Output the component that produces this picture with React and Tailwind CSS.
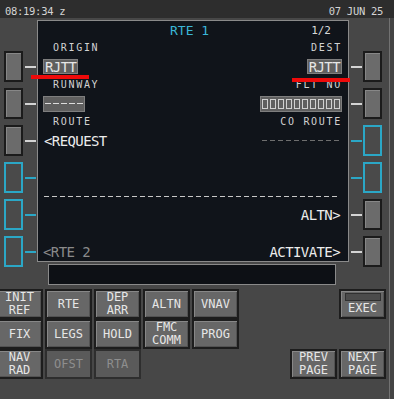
import React from "react"

const LEFT = [false, false, false, true, true, true]
const RIGHT = [false, false, true, true, false, false]

function LskButton({ cyan }) {
  return (
    <div
      className={`w-[19px] h-[31px] shrink-0 border-2 ${
        cyan ? "border-[#2ba7c6] bg-[#4a4a4a]" : "border-[#1b1b1b] bg-[#6b6b6b] shadow-[inset_1px_1px_0_#878787]"
      }`}
    />
  )
}

function Dash({ cyan }) {
  return <div className={`w-[11px] h-[2px] ${cyan ? "bg-[#2ba7c6]" : "bg-[#d4d4d4]"}`} />
}

function Key({ lines, dim, exec }) {
  return (
    <div
      className={`h-[30px] border-2 flex flex-col items-center justify-center text-[12px] leading-[13px] ${
        dim
          ? "border-[#2e2e2e] bg-[#5a5a5a] text-[#8e8e8e]"
          : "border-[#1d1d1d] bg-[#676767] text-[#e6e6e6] shadow-[inset_1px_1px_0_#878787,inset_-1px_-1px_0_#525252]"
      }`}
    >
      {exec && <div className="w-[36px] h-[8px] bg-[#4b4b4b] border border-[#303030] mb-[1px]" />}
      {lines.map((l) => (
        <span key={l}>{l}</span>
      ))}
    </div>
  )
}

export default function App() {
  const big = "text-[14px] tracking-[-0.6px] leading-[16px]"
  const label = "text-[10px] tracking-[1.7px] leading-[12px] text-[#d2d2d2]"

  return (
    <div className="relative w-[394px] h-[399px] overflow-hidden bg-[#474747] font-['DejaVu_Sans_Mono','Liberation_Mono',monospace]">
      {/* Top bar */}
      <div className="h-[18px] bg-[#2d2d2d] flex items-end justify-between pl-[5px] pr-[11px] pb-[1px] text-[10.5px] tracking-[-0.3px] leading-[12px] text-[#d4d4d4]">
        <span>08:19:34 z</span>
        <span>07 JUN 25</span>
      </div>

      <div className="flex h-[381px]">
        <div className="w-[389px] flex flex-col">
          {/* Screen + line select keys */}
          <div className="flex h-[246px] pt-[2px]">
            <div className="w-[37px] flex flex-col gap-[6px] pt-[31px]">
              {LEFT.map((c, i) => (
                <div key={i} className="flex items-center shrink-0 pl-[4px] gap-[2px]">
                  <LskButton cyan={c} />
                  <Dash cyan={c} />
                </div>
              ))}
            </div>

            <div className="w-[312px] h-[242px] shrink-0 border border-[#8a8a8a] bg-[#10141a] flex flex-col">
              {/* title */}
              <div className="h-[18px] flex items-center justify-between pl-[132px] pr-[17px]">
                <span className="text-[13px] leading-[15px] text-[#3ab6d8]">RTE 1</span>
                <span className="text-[11px] leading-[13px] text-[#d8d8d8]">1/2</span>
              </div>

              {/* row 1 */}
              <div className="h-[18px] flex items-center justify-between pl-[15px] pr-[6px]">
                <span className={label}>ORIGIN</span>
                <span className={label}>DEST</span>
              </div>
              <div className="h-[19px] flex items-center justify-between pl-[5px] pr-[6px]">
                <span className={`${big} h-[15px] px-[1px] flex items-center bg-[#5f5f5f] border border-[#7e7e7e] text-[#e6e6e6]`}>RJTT</span>
                <span className={`${big} h-[15px] px-[1px] flex items-center bg-[#5f5f5f] border border-[#7e7e7e] text-[#e6e6e6]`}>RJTT</span>
              </div>

              {/* row 2 */}
              <div className="h-[18px] flex items-center justify-between pl-[15px] pr-[6px]">
                <span className={label}>RUNWAY</span>
                <span className={label}>FLT NO</span>
              </div>
              <div className="h-[19px] flex items-center justify-between pl-[5px] pr-[6px]">
                <div className="w-[42px] h-[16px] flex items-center justify-center bg-[#5f5f5f] border border-[#7e7e7e]">
                  <div className="w-[38px] h-[1px] bg-[repeating-linear-gradient(90deg,#dcdcdc_0_6px,transparent_6px_8px)]" />
                </div>
                <div className="w-[82px] h-[16px] flex items-center justify-center gap-[2px] bg-[#5f5f5f] border border-[#7e7e7e]">
                  {Array.from({ length: 10 }).map((_, i) => (
                    <span key={i} className="w-[6px] h-[10px] border border-[#d0d0d0]" />
                  ))}
                </div>
              </div>

              {/* row 3 */}
              <div className="h-[18px] flex items-center justify-between pl-[15px] pr-[6px]">
                <span className={label}>ROUTE</span>
                <span className={`${label} text-[#6c6c6c]`}>CO ROUTE</span>
              </div>
              <div className="h-[19px] flex items-center justify-between pl-[6px] pr-[8px]">
                <span className={`${big} text-[#ececec]`}>&lt;REQUEST</span>
                <div className="w-[78px] h-[1px] bg-[repeating-linear-gradient(90deg,#6e6e6e_0_5px,transparent_5px_8px)]" />
              </div>

              {/* row 4 */}
              <div className="h-[37px]" />

              {/* row 5 */}
              <div className="h-[18px] flex items-center pl-[6px] pr-[8px]">
                <div className="w-full h-[1px] bg-[repeating-linear-gradient(90deg,#c8c8c8_0_5px,transparent_5px_8px)]" />
              </div>
              <div className="h-[19px] flex items-center justify-end pr-[8px]">
                <span className={`${big} text-[#ececec]`}>ALTN&gt;</span>
              </div>

              {/* row 6 */}
              <div className="h-[18px]" />
              <div className="h-[19px] flex items-center justify-between pl-[5px] pr-[8px]">
                <span className={`${big} text-[#8a8a8a]`}>&lt;RTE 2</span>
                <span className={`${big} text-[#ececec]`}>ACTIVATE&gt;</span>
              </div>
            </div>

            <div className="w-[40px] flex flex-col gap-[6px] pt-[31px]">
              {RIGHT.map((c, i) => (
                <div key={i} className="flex items-center shrink-0 pl-[2px] gap-[1px]">
                  <Dash cyan={c} />
                  <LskButton cyan={c} />
                </div>
              ))}
            </div>
          </div>

          {/* Scratchpad */}
          <div className="ml-[48px] w-[288px] h-[21px] border border-[#8a8a8a] bg-[#0d1015]" />

          {/* Mode keys */}
          <div className="mt-[4px] ml-[-4px] grid grid-cols-[repeat(8,47px)] gap-x-[2px]">
            <Key lines={["INIT", "REF"]} />
            <Key lines={["RTE"]} />
            <Key lines={["DEP", "ARR"]} />
            <Key lines={["ALTN"]} />
            <Key lines={["VNAV"]} />
            <div />
            <div />
            <Key lines={["EXEC"]} exec />

            <Key lines={["FIX"]} />
            <Key lines={["LEGS"]} />
            <Key lines={["HOLD"]} />
            <Key lines={["FMC", "COMM"]} />
            <Key lines={["PROG"]} />
            <div />
            <div />
            <div />

            <Key lines={["NAV", "RAD"]} />
            <Key lines={["OFST"]} dim />
            <Key lines={["RTA"]} dim />
            <div />
            <div />
            <div />
            <Key lines={["PREV", "PAGE"]} />
            <Key lines={["NEXT", "PAGE"]} />
          </div>
        </div>
        <div className="w-[1px] bg-[#727272]" />
        <div className="flex-1 bg-[#444444]" />
      </div>

      {/* Red annotation marks */}
      <div className="absolute left-[31px] top-[75px] w-[58px] h-[4px] bg-[#ee0a0a]" />
      <div className="absolute left-[292px] top-[78px] w-[58px] h-[4px] bg-[#ee0a0a]" />
    </div>
  )
}
